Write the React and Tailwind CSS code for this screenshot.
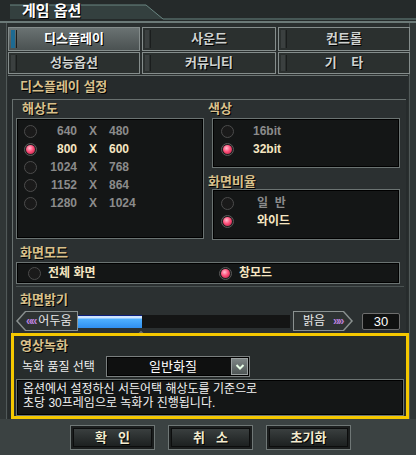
import React from 'react';

const FONT = { fontFamily: '"Liberation Sans", "Noto Sans CJK KR", sans-serif' };

function Radio({ on }) {
  return on ? (
    <span className="flex h-[13px] w-[13px] shrink-0 items-center justify-center rounded-full border border-[#5a5a5a] bg-[#1c1c1c]">
      <span className="block h-[9px] w-[9px] rounded-full bg-[radial-gradient(circle_at_40%_35%,#ffc0d0_0%,#ff4f7a_45%,#a81a3c_100%)]" />
    </span>
  ) : (
    <span className="block h-[13px] w-[13px] shrink-0 rounded-full border border-[#4c4c4c] bg-[#1a1a1a]" />
  );
}

function Label({ children, className = '' }) {
  return (
    <p className={`text-[13px] font-bold leading-none text-[#d9c08c] [text-shadow:1px_1px_0_#000] ${className}`}>
      {children}
    </p>
  );
}

function Box({ children, className = '' }) {
  return (
    <div className={`border border-[#6b7372] bg-[#141616] shadow-[inset_0_0_0_1px_#000] ${className}`}>
      {children}
    </div>
  );
}

function Tab({ children, active }) {
  return (
    <div
      className={`relative flex items-center justify-center border border-[#858d8c] text-[13px] font-bold [text-shadow:1px_1px_0_#000] ${
        active ? 'bg-gradient-to-b from-[#6a7272] to-[#4b5252] text-white' : 'bg-[#2b302f] text-[#cfd2d0]'
      }`}
    >
      <span className={`absolute left-[2px] top-[2px] bottom-[2px] w-[4px] ${active ? 'bg-[#1d6a92]' : 'bg-[#3b4040]'}`} />
      <span className="absolute left-[7px] top-[2px] bottom-[2px] w-px bg-[#1a1d1d]" />
      {children}
    </div>
  );
}

function Btn({ children }) {
  return (
    <div className="flex h-[25px] w-[85px] items-center justify-center border border-[#6f7776] bg-[#1b1e1e] p-[2px]">
      <div className="flex h-full w-full items-center justify-center border border-[#0c0d0d] bg-gradient-to-b from-[#3a3f3f] to-[#1d2121] text-[13px] font-bold text-[#f4ecd0] [text-shadow:1px_1px_0_#000]">
        {children}
      </div>
    </div>
  );
}

const resolutions = [
  ['640', '480'],
  ['800', '600', true],
  ['1024', '768'],
  ['1152', '864'],
  ['1280', '1024'],
];

export default function App() {
  return (
    <div style={FONT} className="relative flex h-[455px] w-[416px] flex-col overflow-hidden bg-[#2d3333]">
      {/* title bar */}
      <div className="relative h-[21px] shrink-0 bg-[#252a2a]">
        <svg className="absolute inset-0" width="416" height="21" viewBox="0 0 416 21">
          <path d="M10 5 L146 5 L163 19 L10 19 Z" fill="#34403f" />
          <path d="M10 5 L146 5 L163 19 L416 19" fill="none" stroke="#6a8682" strokeWidth="1" />
        </svg>
        <p className="relative pl-[22px] pt-[2px] text-[15px] font-bold leading-[17px] text-white [text-shadow:1px_1px_0_#000]">
          게임 옵션
        </p>
      </div>

      {/* window body */}
      <div className="flex flex-1 flex-col border-t-2 border-[#6c7a78] bg-[#303636]">
        <div className="mx-[6px] flex flex-1 flex-col border-x border-[#515959] bg-[#2a2f2f] px-[1px]">
          {/* tabs */}
          <div className="mt-[4px] grid grid-cols-[132px_134px_132px] grid-rows-[24px_22px] gap-x-[2px] gap-y-px">
            <Tab active>디스플레이</Tab>
            <Tab>사운드</Tab>
            <Tab>컨트롤</Tab>
            <Tab>성능옵션</Tab>
            <Tab>커뮤니티</Tab>
            <Tab>기&nbsp;&nbsp;&nbsp;&nbsp;타</Tab>
          </div>

          {/* main panel */}
          <div className="mt-px flex h-[344px] flex-col border-t border-[#6e7675] bg-[#262b2c]">
            <Label className="pl-[12px] pt-[4px]">디스플레이 설정</Label>

            <div className="ml-[4px] mr-[2px] mt-[6px] flex flex-1 flex-col border-l border-t border-[#68706f] bg-[#2b3031] pl-[3px] pr-[2px]">
              <div className="flex gap-[8px]">
                {/* resolution */}
                <div className="w-[188px]">
                  <Label className="h-[18px] pl-[6px] pt-[2px]">해상도</Label>
                  <Box className="h-[121px] pt-[3px]">
                    {resolutions.map(([a, b, on]) => (
                      <div key={a} className="flex h-[18px] items-center">
                        <span className="ml-[7px] block"><Radio on={on} /></span>
                        <span className={`w-[40px] text-right text-[12px] font-bold ${on ? 'text-[#f6e6c2]' : 'text-[#8b8b8b]'}`}>{a}</span>
                        <span className={`w-[32px] text-center text-[12px] font-bold ${on ? 'text-[#f6e6c2]' : 'text-[#8b8b8b]'}`}>X</span>
                        <span className={`text-[12px] font-bold ${on ? 'text-[#f6e6c2]' : 'text-[#8b8b8b]'}`}>{b}</span>
                      </div>
                    ))}
                  </Box>
                </div>

                {/* color + ratio */}
                <div className="w-[188px]">
                  <Label className="-ml-[4px] h-[18px] pt-[2px]">색상</Label>
                  <Box className="h-[50px] pt-[3px]">
                    <div className="flex h-[18px] items-center">
                      <span className="ml-[8px] block"><Radio /></span>
                      <span className="ml-[19px] text-[12px] font-bold text-[#8b8b8b]">16bit</span>
                    </div>
                    <div className="flex h-[18px] items-center">
                      <span className="ml-[8px] block"><Radio on /></span>
                      <span className="ml-[19px] text-[12px] font-bold text-[#f6e6c2]">32bit</span>
                    </div>
                  </Box>
                  <Label className="-ml-[4px] h-[21px] pt-[7px]">화면비율</Label>
                  <Box className="h-[51px] pt-[4px]">
                    <div className="flex h-[18px] items-center">
                      <span className="ml-[8px] block"><Radio /></span>
                      <span className="ml-[23px] text-[12px] font-bold text-[#8b8b8b]">일&nbsp;&nbsp;반</span>
                    </div>
                    <div className="flex h-[18px] items-center">
                      <span className="ml-[8px] block"><Radio on /></span>
                      <span className="ml-[23px] text-[12px] font-bold text-[#f6e6c2]">와이드</span>
                    </div>
                  </Box>
                </div>
              </div>

              {/* screen mode */}
              <Label className="h-[22px] pl-[4px] pt-[6px]">화면모드</Label>
              <Box className="flex h-[22px] w-[384px] items-center">
                <span className="ml-[11px] block"><Radio /></span>
                <span className="ml-[7px] w-[171px] text-[12px] font-bold text-[#f6e6c2]">전체 화면</span>
                <Radio on />
                <span className="ml-[7px] text-[12px] font-bold text-[#f6e6c2]">창모드</span>
              </Box>

              {/* brightness */}
              <div className="mt-[2px] border-t border-[#4a5252]" />
              <Label className="h-[24px] pl-[4px] pt-[6px]">화면밝기</Label>
              <div className="relative flex h-[20px] items-center">
                <div className="h-[20px] w-[62px] bg-[#8a9190] [clip-path:polygon(9px_0,100%_0,100%_100%,9px_100%,0_50%)]">
                  <div className="flex h-full w-full items-center bg-[#2e3333] [clip-path:polygon(10px_1px,calc(100%-1px)_1px,calc(100%-1px)_calc(100%-1px),10px_calc(100%-1px),2px_50%)]">
                    <span className="ml-[10px] text-[12px] font-bold leading-none tracking-[-2px] text-[#b77fd8]">««</span>
                    <span className="ml-[3px] text-[12px] leading-none text-[#e8e8e8]">어두움</span>
                  </div>
                </div>
                <div className="flex h-[13px] w-[212px] overflow-hidden bg-[#141515]">
                  <div className="h-full w-[64px] border-t border-[#0b1d7a] bg-[linear-gradient(to_bottom,#cfe4ff_0px,#cfe4ff_2px,#4fb0ff_3px,#2f8ff0_100%)]" />
                </div>
                <div className="ml-[3px] h-[20px] w-[60px] bg-[#8a9190] [clip-path:polygon(0_0,calc(100%-9px)_0,100%_50%,calc(100%-9px)_100%,0_100%)]">
                  <div className="flex h-full w-full items-center bg-[#2e3333] [clip-path:polygon(1px_1px,calc(100%-10px)_1px,calc(100%-2px)_50%,calc(100%-10px)_calc(100%-1px),1px_calc(100%-1px))]">
                    <span className="ml-[10px] text-[12px] leading-none text-[#e8e8e8]">밝음</span>
                    <span className="ml-[8px] text-[12px] font-bold leading-none tracking-[-2px] text-[#b77fd8]">»»</span>
                  </div>
                </div>
                <div className="ml-[9px] flex h-[17px] w-[38px] items-center justify-center rounded-[2px] border border-[#6e6e6e] bg-[#101111] text-[13px] leading-none text-white">
                  30
                </div>
                <span className="absolute left-[122px] top-[21px] h-[6px] w-[6px] rotate-45 border border-[#555] bg-[#a7abab]" />
              </div>
            </div>
          </div>
        </div>

        {/* bottom buttons */}
        <div className="flex h-[37px] items-center justify-center gap-[13px] bg-[#3b4242] pl-[5px]">
          <Btn>확&nbsp;&nbsp;&nbsp;인</Btn>
          <Btn>취&nbsp;&nbsp;&nbsp;소</Btn>
          <Btn>초기화</Btn>
        </div>
      </div>

      {/* recording panel overlaying the lower part */}
      <div className="absolute left-[11px] top-[333px] flex h-[86px] w-[398px] flex-col border-[3px] border-[#f5c800] bg-[#272c2c]">
        <Label className="pl-[6px] pt-[3px]">영상녹화</Label>
        <div className="mt-[4px] flex h-[21px] items-center">
          <span className="ml-[8px] w-[84px] text-[12px] leading-none text-[#f0f0f0]">녹화 품질 선택</span>
          <div className="flex h-[21px] w-[144px] items-center border border-[#7a7f7f] bg-[#0f1010] shadow-[inset_0_0_0_1px_#000]">
            <span className="flex-1 pl-[8px] text-center text-[13px] leading-none text-white">일반화질</span>
            <span className="mr-[1px] flex h-[17px] w-[17px] items-center justify-center border border-[#9aa0a0] bg-gradient-to-b from-[#7d8585] to-[#4f5656]">
              <svg width="10" height="8" viewBox="0 0 10 8">
                <path d="M1.5 2 L5 5.5 L8.5 2" fill="none" stroke="#e8ffe8" strokeWidth="2" />
              </svg>
            </span>
          </div>
        </div>
        <Box className="mx-[2px] mt-[2px] flex-1 px-[6px] pt-[2px]">
          <p className="text-[12px] leading-[14px] text-[#f2f2f2]">
            옵션에서 설정하신 서든어택 해상도를 기준으로
            <br />
            초당 30프레임으로 녹화가 진행됩니다.
          </p>
        </Box>
      </div>
    </div>
  );
}
